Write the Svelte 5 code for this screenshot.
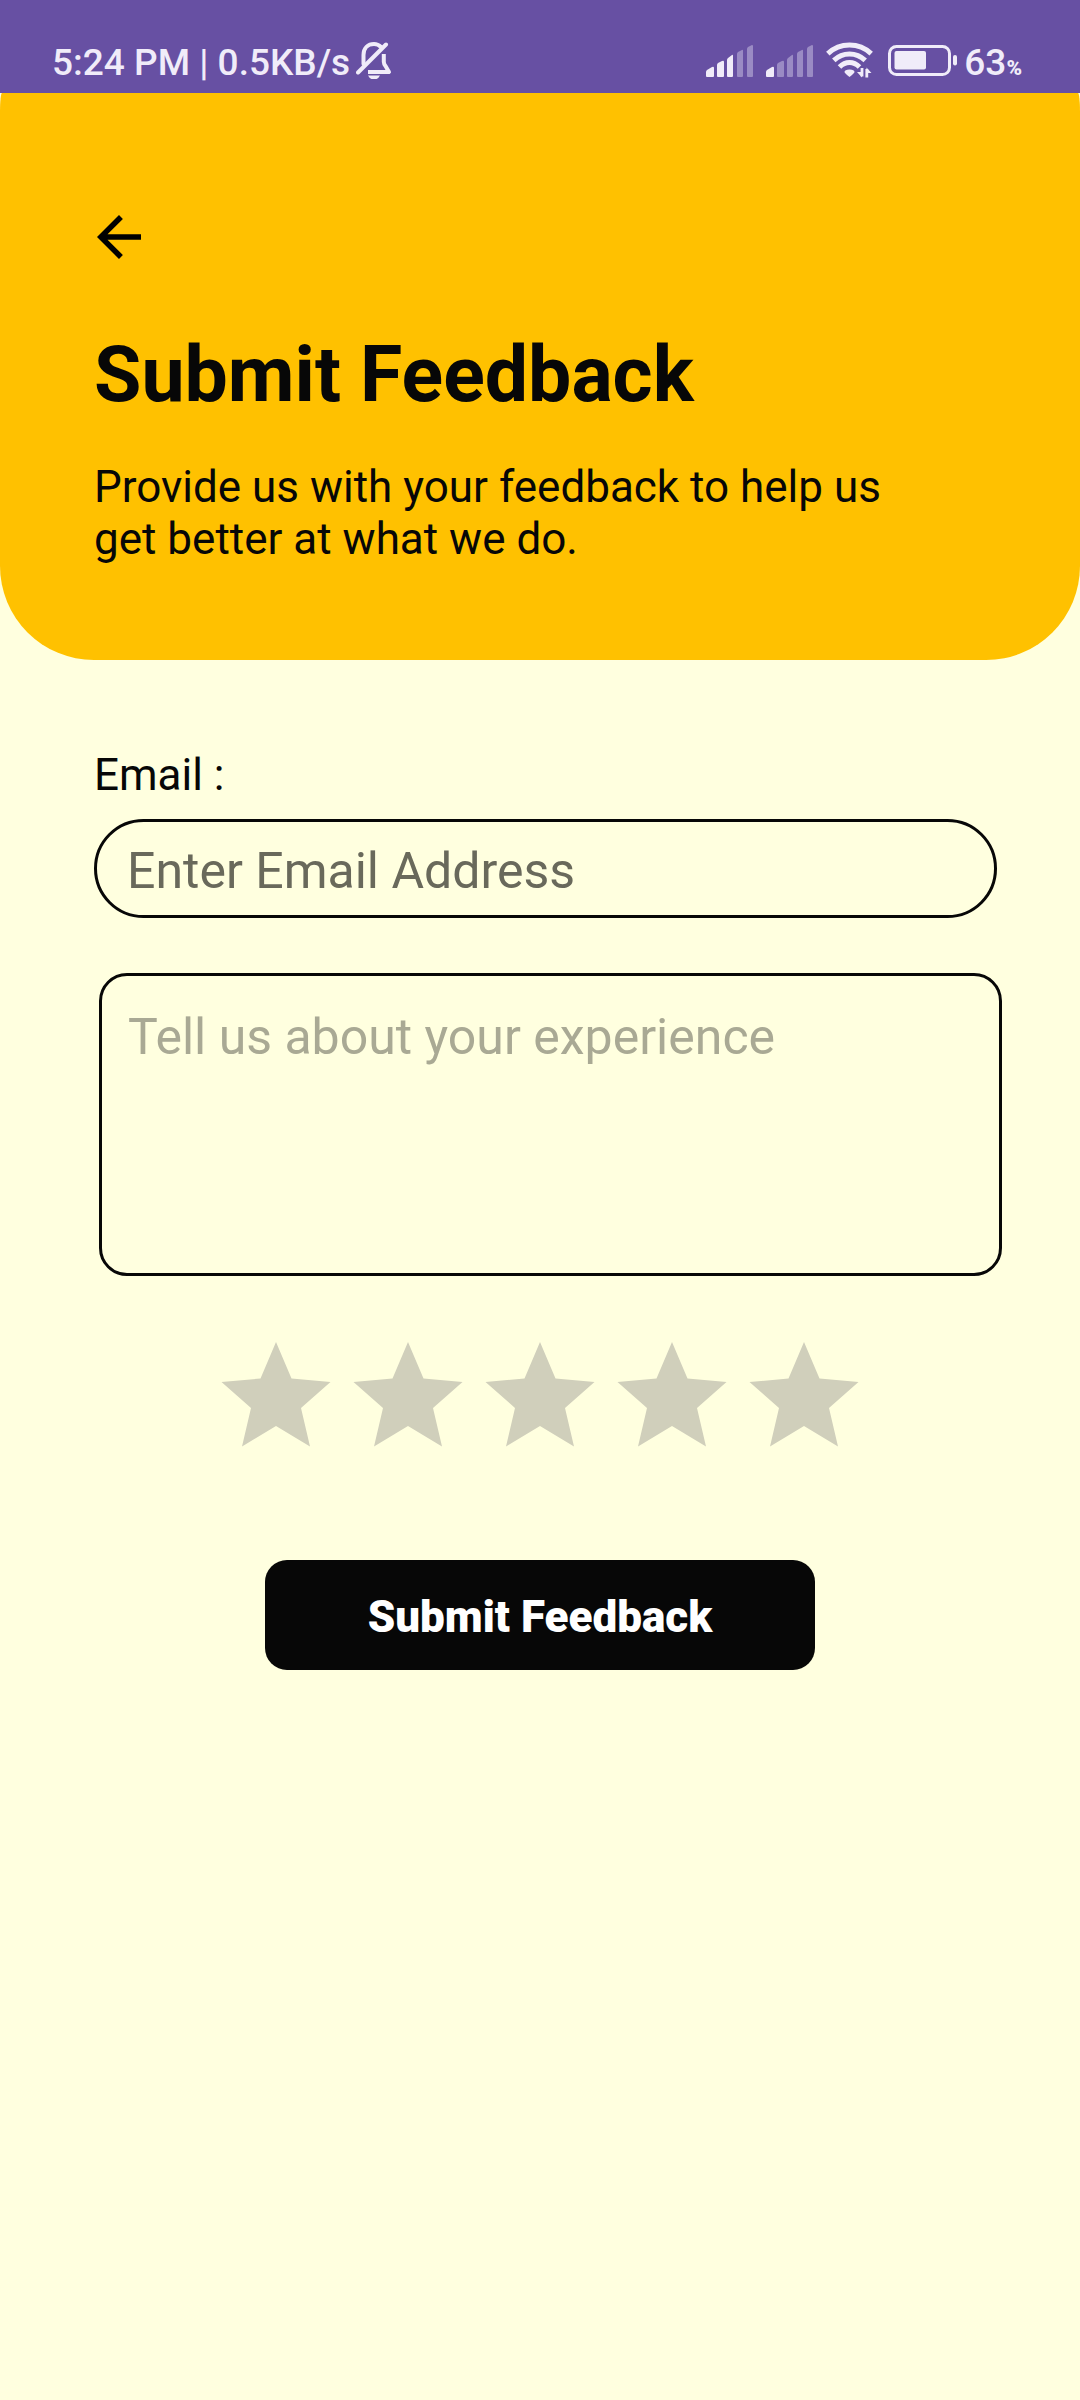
<script>
  let email = $state('');
  let experience = $state('');
  let rating = $state(0);

  const bars = [
    'M0 31v-4q0-1 1-2l5-3q2-1 2 1v8q0 1-1 1H1q-1 0-1-1z',
    'M11 31V20q0-1 1-2l4-2q2-1 2 1v14q0 1-1 1h-5q-1 0-1-1z',
    'M21 31V15q0-1 1-2l4-3q1-1 1 1v20q0 1-1 1h-4q-1 0-1-1z',
    'M31 31V9q0-1 1-2l4-2q1-1 1 1v25q0 1-1 1h-4q-1 0-1-1z',
    'M41 31V4q0-1 1-2l4-2q1 0 1 1v30q0 1-1 1h-4q-1 0-1-1z'
  ];
  const signals = [3, 1];
  const stars = [1, 2, 3, 4, 5];
</script>

<div class="status">
  <span class="clock">5:24 PM | 0.5KB/s</span>
  <svg class="bell" width="36" height="38" viewBox="0 0 36 38" aria-hidden="true">
    <g fill="none" stroke="currentColor" stroke-width="4" stroke-linecap="round" stroke-linejoin="round">
      <path d="M7.500 23V14C7.500 7 12 3 18 3q4 0 7 3" />
      <path d="M30 3.500 2 31.500" />
      <path d="M27.800 13v8q0 2 2 4.500L33 31H12" stroke-linecap="butt" />
    </g>
    <path d="M12 34.500h12q-2 4-6 4t-6-4z" fill="currentColor" />
  </svg>
  <div class="right">
    {#each signals as level}
      <svg class="signal" width="48" height="32" viewBox="0 0 48 32" fill="currentColor" aria-hidden="true">
        {#each bars as d, i}
          <path {d} opacity={i < level ? 1 : 0.38} />
        {/each}
      </svg>
    {/each}
    <svg class="wifi" width="48" height="36" viewBox="0 0 48 36" aria-hidden="true">
      <g fill="none" stroke="currentColor" stroke-width="5">
        <path d="M1.800 11.600Q11 3 23.500 3t21.700 8.600" />
        <path d="M7.800 18.400Q14.500 12 23.500 12t15.700 6.400" />
        <path d="M13.500 25Q18 20.500 23.500 20.500t10 4.500" />
      </g>
      <path d="M18.500 30q0-2.500 5-2.500t5 2.500q0 1-5 5-5-4-5-5z" fill="currentColor" />
      <path d="M36 26v8.500M40.800 35.500V27" fill="none" stroke="currentColor" stroke-width="2.800" />
      <path d="M31 30h5v5.500zM45.500 31h-5v-5.500z" fill="currentColor" />
    </svg>
    <svg class="battery" width="70" height="31" viewBox="0 0 70 31" aria-hidden="true">
      <rect x="1.500" y="1.500" width="60" height="28" rx="7" fill="none" stroke="currentColor" stroke-width="3" />
      <rect x="6.500" y="6" width="31.500" height="18.500" rx="2" fill="currentColor" />
      <rect x="65" y="10" width="4" height="10.500" rx="2" fill="currentColor" />
    </svg>
    <span class="level">63<small>%</small></span>
  </div>
</div>

<header>
  <button class="back" type="button" aria-label="Back">
    <svg width="66" height="66" viewBox="0 0 24 24" aria-hidden="true">
      <path d="M20 11H7.830l5.590-5.590L12 4l-8 8 8 8 1.410-1.410L7.830 13H20v-2z" />
    </svg>
  </button>
  <h1>Submit Feedback</h1>
  <p>Provide us with your feedback to help us get better at what we do.</p>
</header>

<form onsubmit={(e) => e.preventDefault()}>
  <label class="caption" for="email">Email :</label>
  <input class="email" id="email" type="email" placeholder="Enter Email Address" bind:value={email} />
  <textarea aria-label="Your experience" placeholder="Tell us about your experience" bind:value={experience}></textarea>
  <fieldset aria-label="Rating">
    {#each stars as n}
      <label class="star" class:on={n <= rating}>
        <input type="radio" name="rating" value={n} aria-label={`${n} of 5`} bind:group={rating} />
        <svg width="132" height="132" viewBox="0 0 132 132" aria-hidden="true">
          <path d="M66 11 81.500 47.500 120.500 51 91 77 100 115.500 66 95 32 115.500 41 77 11.500 51 50.500 47.500z" />
        </svg>
      </label>
    {/each}
  </fieldset>
  <button class="submit" type="submit">Submit Feedback</button>
</form>

<style>
  :global(body) {
    background: #ffffdf;
    font-family: Roboto, sans-serif;
    color: #070707;
  }

  svg {
    display: block;
    flex: none;
  }

  .status {
    display: flex;
    align-items: center;
    padding: 42px 58px 9px 52px;
    background: #6750a3;
    color: #f0ecf9;
    font-size: 37px;
    font-weight: 500;
    line-height: 42px;
    white-space: nowrap;
  }

  .bell {
    margin: -6px 0 0 6px;
  }

  .right {
    display: flex;
    align-items: center;
    margin-left: auto;
  }

  .signal {
    margin: -4px 12px 0 0;
  }

  .wifi,
  .battery {
    margin-top: -6px;
  }

  .battery {
    margin-left: 14px;
  }

  .level {
    margin-left: 6px;
  }

  small {
    font-size: 21px;
    font-weight: 900;
    line-height: 20px;
  }

  header {
    padding: 111px 94px 95px;
    background: #ffc100;
    border-radius: 2px 2px 94px 94px / 19px 19px 94px 94px;
  }

  .back {
    display: block;
    margin: 0 0 60px -8px;
    padding: 0;
    border: 0;
    background: none;
  }

  h1 {
    margin: 0 0 41px;
    font-size: 77px;
    font-weight: 700;
    line-height: 90px;
  }

  p {
    max-width: 820px;
    margin: 0;
    font-size: 44px;
    line-height: 52px;
  }

  form {
    display: flex;
    flex-direction: column;
    padding: 89px 78px 97px;
  }

  .caption {
    margin: 0 0 18px 16px;
    font-size: 44px;
    line-height: 52px;
  }

  .email,
  textarea {
    box-sizing: border-box;
    border: 3px solid #070707;
    background: transparent;
    color: #070707;
    font-family: inherit;
    font-size: 50px;
    line-height: 58px;
    outline: 0;
  }

  .email {
    height: 99px;
    margin: 0 5px 55px 16px;
    padding: 5px 30px 0;
    border-radius: 50px;
  }

  textarea {
    height: 303px;
    margin: 0 0 55px 21px;
    padding: 32px 26px;
    border-radius: 28px;
    resize: none;
  }

  .email::placeholder {
    color: #69695b;
    opacity: 1;
  }

  textarea::placeholder {
    color: #a9a994;
    opacity: 1;
  }

  fieldset {
    display: flex;
    justify-content: center;
    align-self: center;
    margin: 0 0 97px;
    padding: 0;
    border: 0;
  }

  .star {
    position: relative;
    fill: #d0cfbb;
  }

  .star.on {
    fill: #ffc100;
  }

  .star input {
    position: absolute;
    inset: 0;
    margin: 0;
    opacity: 0;
  }

  .submit {
    align-self: center;
    width: 550px;
    max-width: 100%;
    padding: 31px 0 27px;
    border: 0;
    border-radius: 22px;
    background: #070707;
    color: #fff;
    font-family: inherit;
    font-size: 44px;
    font-weight: 900;
    line-height: 52px;
  }
</style>
